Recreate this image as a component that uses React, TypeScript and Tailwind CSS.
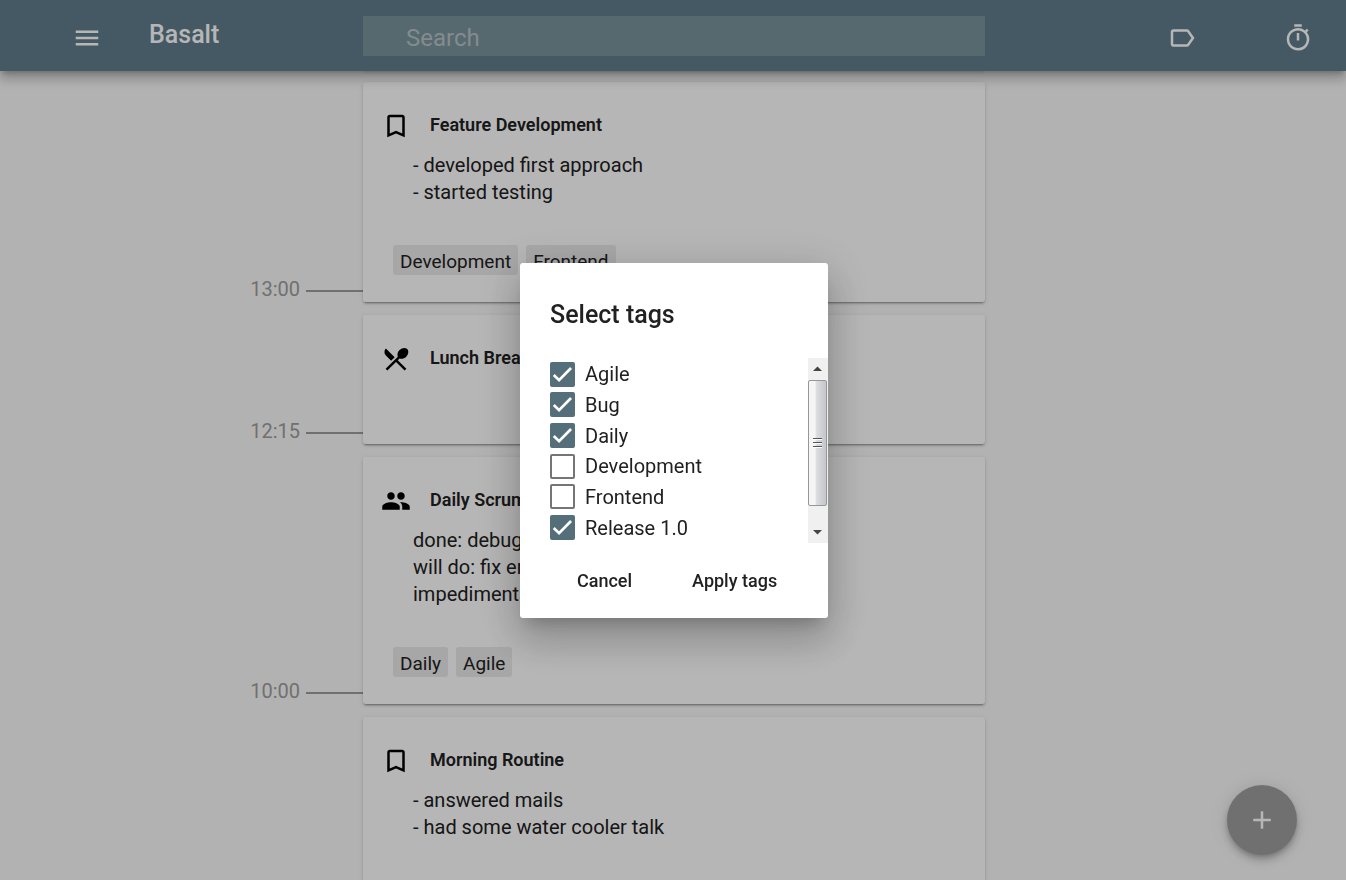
import { useState } from "react";
import type { ReactNode } from "react";
import {
  MdAdd,
  MdBookmarkBorder,
  MdLabelOutline,
  MdMenu,
  MdPeople,
  MdRestaurantMenu,
  MdOutlineTimer,
} from "react-icons/md";

const cardStyle =
  "rounded-[3px] bg-white shadow-[0_3px_1px_-2px_rgba(0,0,0,0.2),0_2px_2px_0_rgba(0,0,0,0.14),0_1px_5px_0_rgba(0,0,0,0.12)]";

type Entry = {
  title: string;
  icon: ReactNode;
  lines: string[];
  tags: string[];
  time?: string;
};

const entries: Entry[] = [
  {
    title: "Feature Development",
    icon: <MdBookmarkBorder size={30} />,
    lines: ["- developed first approach", "- started testing"],
    tags: ["Development", "Frontend"],
    time: "13:00",
  },
  {
    title: "Lunch Break",
    icon: <MdRestaurantMenu size={30} />,
    lines: [],
    tags: [],
    time: "12:15",
  },
  {
    title: "Daily Scrum",
    icon: <MdPeople size={30} />,
    lines: ["done: debugging", "will do: fix errors", "impediments: none"],
    tags: ["Daily", "Agile"],
    time: "10:00",
  },
  {
    title: "Morning Routine",
    icon: <MdBookmarkBorder size={30} />,
    lines: ["- answered mails", "- had some water cooler talk"],
    tags: [],
  },
];

function Header() {
  return (
    <header className="relative z-10 grid h-[71px] shrink-0 grid-cols-[1fr_minmax(0,622px)_1fr] bg-[#607d8b] pl-0.5 shadow-[0_5px_5px_-3px_rgba(0,0,0,0.2),0_8px_10px_1px_rgba(0,0,0,0.14),0_3px_14px_2px_rgba(0,0,0,0.12)]">
      <div className="flex items-start gap-[47px] pl-[70px] text-white">
        <button type="button" aria-label="Menu" className="mt-[23px]">
          <MdMenu size={30} />
        </button>
        <h1 className="mt-[19px] text-[25px] leading-8 font-medium">Basalt</h1>
      </div>
      <input
        type="search"
        aria-label="Search"
        placeholder="Search"
        className="mt-4 h-10 w-full bg-[#79939b] px-[43px] pt-1 text-2xl text-white outline-none placeholder:text-[#b9c3c9]"
      />
      <div className="flex items-start justify-end gap-[86px] pt-[23px] pr-[33px] text-white">
        <button type="button" aria-label="Tags">
          <MdLabelOutline size={30} />
        </button>
        <button type="button" aria-label="Timer">
          <MdOutlineTimer size={30} />
        </button>
      </div>
    </header>
  );
}

function EntryRow({ entry }: { entry: Entry }) {
  return (
    <li className="grid grid-cols-[1fr_minmax(0,622px)_1fr] pl-0.5">
      <div className="flex items-center justify-end gap-1.5 self-end text-xl leading-[26px] text-[#9e9e9e]">
        {entry.time && (
          <>
            <time>{entry.time}</time>
            <span className="mt-[3px] h-0.5 w-[57px] bg-[#9e9e9e]" />
          </>
        )}
      </div>
      <article className={`${cardStyle} flex min-h-[129px] flex-col pb-[27px]`}>
        <div className="flex h-[70px] items-start pt-[29px] pl-[18px]">
          <span className="text-black">{entry.icon}</span>
          <h2 className="ml-[19px] text-lg leading-7 font-semibold">{entry.title}</h2>
        </div>
        {entry.lines.length > 0 && (
          <>
            <div className="px-[50px] text-xl leading-[27px]">
              {entry.lines.map((line) => (
                <p key={line}>{line}</p>
              ))}
            </div>
            <ul className="mt-[39px] flex min-h-[30px] gap-2 px-[30px]">
              {entry.tags.map((tag) => (
                <li
                  key={tag}
                  className="h-[30px] rounded-[3px] bg-[#ebebeb] px-[7px] pt-[3px] text-[19px] leading-7"
                >
                  {tag}
                </li>
              ))}
            </ul>
          </>
        )}
      </article>
    </li>
  );
}

function ScrollTrack() {
  return (
    <div
      aria-hidden="true"
      className="flex w-5 shrink-0 flex-col items-center bg-[#f0f0f0] pr-px"
    >
      <svg width="9" height="22" viewBox="0 0 9 22">
        <path d="M4.500 8.500 9 13H0z" fill="#444" />
      </svg>
      <div className="flex h-[126px] w-[19px] flex-col items-center justify-center gap-0.5 rounded-[2px] border border-[#979797] bg-linear-to-r from-[#f5f5f5] from-35% via-[#dcdde0] via-45% to-[#c4c5ca]">
        <span className="h-0.5 w-[9px] border-b border-white bg-[#555]" />
        <span className="h-0.5 w-[9px] border-b border-white bg-[#555]" />
        <span className="h-0.5 w-[9px] border-b border-white bg-[#555]" />
      </div>
      <svg className="mt-auto" width="9" height="22" viewBox="0 0 9 22">
        <path d="M0 9h9l-4.500 4.500z" fill="#444" />
      </svg>
    </div>
  );
}

function TagDialog() {
  const [tags, setTags] = useState([
    { name: "Agile", on: true },
    { name: "Bug", on: true },
    { name: "Daily", on: true },
    { name: "Development", on: false },
    { name: "Frontend", on: false },
    { name: "Release 1.0", on: true },
  ]);
  const toggle = (name: string) =>
    setTags(tags.map((t) => (t.name === name ? { ...t, on: !t.on } : t)));

  return (
    <div className="fixed inset-0 z-30 flex items-center justify-center bg-black/[0.288] pt-px pl-0.5">
      <div
        role="dialog"
        aria-labelledby="tags-title"
        className="w-[308px] rounded-[3px] bg-white pt-9 pb-[19px] shadow-[0_11px_15px_-7px_rgba(0,0,0,0.2),0_24px_38px_3px_rgba(0,0,0,0.14),0_9px_46px_8px_rgba(0,0,0,0.12)]"
      >
        <h2 id="tags-title" className="px-[30px] text-[25px] leading-8 font-medium">
          Select tags
        </h2>
        <div className="mt-[27px] flex h-[185px]">
          <div className="grid flex-1 auto-rows-fr pt-px pl-[30px]">
            {tags.map((tag) => (
              <label key={tag.name} className="flex items-center gap-2.5 text-xl leading-none">
                <span className="grid size-[25px] place-items-center">
                  <input
                    type="checkbox"
                    checked={tag.on}
                    onChange={() => toggle(tag.name)}
                    className="col-start-1 row-start-1 size-[25px] appearance-none rounded-[2px] border-2 border-[#757575] checked:border-[#546e7a] checked:bg-[#546e7a]"
                  />
                  {tag.on && (
                    <svg
                      className="pointer-events-none col-start-1 row-start-1"
                      width="25"
                      height="25"
                      viewBox="0 0 24 24"
                      fill="none"
                      stroke="#fff"
                      strokeWidth="2.6"
                    >
                      <path d="M3.600 12.500 8.700 17.400 20.200 5.800" />
                    </svg>
                  )}
                </span>
                {tag.name}
              </label>
            ))}
          </div>
          <ScrollTrack />
        </div>
        <div className="mt-5 flex gap-[60px] pl-[57px] text-lg leading-9 font-medium">
          <button type="button">Cancel</button>
          <button type="button">Apply tags</button>
        </div>
      </div>
    </div>
  );
}

export default function App() {
  return (
    <div className="flex h-screen flex-col overflow-hidden bg-[#fafafa] font-['Roboto',sans-serif] text-[#212121]">
      <Header />
      <main className="-mt-[18px]">
        <div className="grid grid-cols-[1fr_minmax(0,622px)_1fr] pl-0.5">
          <div className={`${cardStyle} col-start-2 h-4`} />
        </div>
        <ul className="mt-[13px] flex flex-col gap-[13px]">
          {entries.map((entry) => (
            <EntryRow key={entry.title} entry={entry} />
          ))}
        </ul>
      </main>
      <button
        type="button"
        aria-label="Add entry"
        className="fixed right-[49px] bottom-[25px] z-20 flex size-[70px] items-center justify-center rounded-full bg-[#9e9e9e] text-white shadow-[0_3px_5px_-1px_rgba(0,0,0,0.2),0_6px_10px_0_rgba(0,0,0,0.14),0_1px_18px_0_rgba(0,0,0,0.12)]"
      >
        <MdAdd size={30} />
      </button>
      <TagDialog />
    </div>
  );
}
